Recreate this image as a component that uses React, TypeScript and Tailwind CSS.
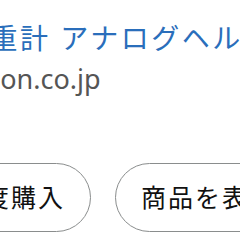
export default function App() {
  return (
    <div
      className="relative h-[240px] w-[240px] overflow-hidden bg-white"
      style={{ fontFamily: '"Noto Sans", "Noto Sans CJK JP", sans-serif' }}
    >
      <div className="flex flex-col pt-[20px]">
        <p className="ml-[-41px] whitespace-nowrap text-[28px] leading-[36px] tracking-[2.5px] text-[#2a6ebb]">
          体重計 アナログヘルスメーター
        </p>
        <p className="ml-[-68px] mt-[5px] whitespace-nowrap text-[27px] leading-[36px] text-[#555]">
          amazon.co.jp
        </p>
        <div className="mt-[66px] ml-[-69px] flex gap-[24px]">
          <button className="h-[69px] shrink-0 whitespace-nowrap rounded-full border border-[#8a8d8d] px-[25px] text-[25px] tracking-[2px] text-[#111]">
            再度購入
          </button>
          <button className="h-[69px] shrink-0 whitespace-nowrap rounded-full border border-[#8a8d8d] px-[25px] text-[25px] tracking-[2px] text-[#111]">
            商品を表示
          </button>
        </div>
      </div>
    </div>
  );
}
